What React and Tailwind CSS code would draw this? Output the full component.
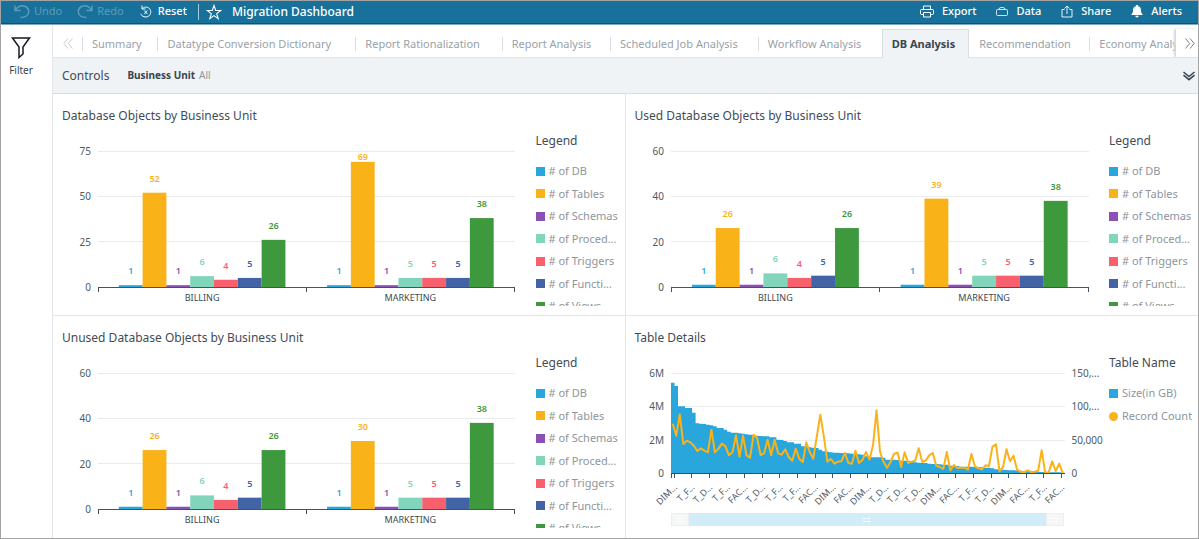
import { useState } from "react";

const SERIES = [
  { name: "# of DB", color: "#29a6dc" },
  { name: "# of Tables", color: "#fab219" },
  { name: "# of Schemas", color: "#8a50b4" },
  { name: "# of Proced...", color: "#81d5bb" },
  { name: "# of Triggers", color: "#f7606d" },
  { name: "# of Functi...", color: "#4363a7" },
  { name: "# of Views", color: "#3e983e" },
];

const TABS = [
  "Summary",
  "Datatype Conversion Dictionary",
  "Report Rationalization",
  "Report Analysis",
  "Scheduled Job Analysis",
  "Workflow Analysis",
  "DB Analysis",
  "Recommendation",
  "Economy Analysis",
];

const TABLE_LABELS = [
  "DIM", "T_F", "T_D", "T_F", "FAC", "T_D", "T_F", "T_F", "FAC", "DIM", "FAC", "DIM",
  "T_D", "T_D", "T_D", "DIM", "FAC", "T_F", "T_D", "DIM", "FAC", "T_F", "FAC",
];

// table sizes, in millions
const SIZES = [
  5.42, 5.22, 4, 4, 3.9, 3.9, 3.62, 2.98, 2.95, 2.94, 2.9, 2.86, 2.8, 2.7, 2.7, 2.6,
  2.48, 2.42, 2.42, 2.38, 2.36, 2.32, 2.3, 2.28, 2.24, 2.22, 2.2, 2.2, 2.15, 2.14,
  2, 1.98, 1.92, 1.85, 1.85, 1.75, 1.75, 1.6, 1.6, 1.55, 1.52, 1.5, 1.4, 1.3, 1.27,
  1.25, 1.22, 1.22, 1.2, 1.2, 1.18, 1.16, 1.14, 1.12, 1.1, 1, 0.96, 0.94, 0.94, 0.94,
  0.92, 0.8, 0.8, 0.8, 0.78, 0.74, 0.74, 0.74, 0.7, 0.64, 0.62, 0.6, 0.6, 0.56, 0.54,
  0.54, 0.52, 0.5, 0.5, 0.44, 0.42, 0.42, 0.38, 0.38, 0.38, 0.38, 0.36, 0.36, 0.34,
  0.32, 0.32, 0.28, 0.22, 0.2, 0.2, 0.18, 0.16, 0.16, 0.15, 0.14, 0.12, 0.12, 0.1,
  0.1, 0.08, 0.06, 0.06, 0.05, 0.05, 0.04, 0.04, 0.02,
];

// record counts, in thousands
const RECORDS = [
  74, 56, 88, 43.5, 48.5, 46, 41, 33, 37, 33.5, 31, 65, 31, 36.5, 44, 40, 26.5, 31,
  56.5, 24.5, 56, 26.5, 23, 57.5, 52.5, 27, 29.5, 50, 26.5, 50, 29.5, 27.5, 35.5, 24,
  18.5, 36.5, 21.5, 16.5, 46, 31.5, 21.5, 55, 87.5, 55, 17, 21, 14, 17, 17.5, 30, 15,
  14, 33.5, 15, 19.5, 31.5, 20, 41.5, 94, 31.5, 16.5, 8, 16.5, 29, 30.5, 9, 31, 15,
  17, 18.5, 37, 16.5, 18.5, 26.5, 30, 11, 9, 6, 31.5, 4, 12, 7.5, 8, 8, 5, 28.5, 10,
  7, 5.5, 11.5, 10.5, 39.5, 43, 2.5, 9, 35.5, 17.5, 26, 5, 2, 1, 4, 1.5, 2, 3.5, 34,
  1, 0.5, 17.5, 3, 14, 0,
];

function BarChart({ title, max, groups }) {
  const height = 136;
  const y = (v) => height - (v / max) * height;
  const band = 100 / groups.length;
  const barWidth = (band * 0.8) / SERIES.length;
  const steps = [3, 2, 1, 0].map((n) => (max / 3) * n);

  return (
    <svg
      role="img"
      aria-label={title}
      className="h-[160px] w-full overflow-visible text-[10px]"
    >
      {steps.map((v) => (
        <g key={v}>
          {v > 0 && (
            <line x1="0" x2="100%" y1={y(v)} y2={y(v)} stroke="#e9ebec" strokeWidth="1" shapeRendering="crispEdges" />
          )}
          <text x="-7" y={y(v) + 4} textAnchor="end" fill="#4d5b65">
            {v}
          </text>
        </g>
      ))}
      {groups.map((group, g) => (
        <g key={group.name}>
          {group.values.map((v, i) => {
            const x = band * (g + 0.1) + barWidth * i;
            return (
              <g key={SERIES[i].name} fill={SERIES[i].color}>
                <rect x={`${x}%`} y={y(v)} width={`${barWidth}%`} height={height - y(v)} />
                <text
                  x={`${x + barWidth / 2}%`}
                  y={Math.max(y(v) - 11, 9)}
                  textAnchor="middle"
                  className="text-[9px] font-semibold"
                >
                  {v}
                </text>
              </g>
            );
          })}
          <text x={`${band * (g + 0.5)}%`} y={height + 14} textAnchor="middle" className="text-[9px]" fill="#3c4a55">
            {group.name}
          </text>
        </g>
      ))}
      <line x1="0" x2="100%" y1={height} y2={height} stroke="#3f5566" shapeRendering="crispEdges" />
      {[0, 50, 100].map((x) => (
        <line key={x} x1={`${x}%`} x2={`${x}%`} y1={height} y2={height + 5} stroke="#3f5566" shapeRendering="crispEdges" />
      ))}
    </svg>
  );
}

function ComboChart() {
  const height = 100;
  const count = SIZES.length;
  const area = SIZES.map((v) => `V${(100 - v / 0.06).toFixed(1)}h1`).join("");
  const points = RECORDS.map((v, i) => `${i + 0.5},${100 - v / 1.5}`).join(" ");
  const left = ["6M", "4M", "2M", "0"];
  const right = ["150,...", "100,...", "50,000", "0"];
  const rows = [0, 33, 67, 100];

  return (
    <svg role="img" aria-label="Table Details" className="h-[132px] w-full overflow-visible text-[10px]">
      {rows.map((row, i) => (
        <g key={row} fill="#4d5b65">
          {row < 100 && (
            <line x1="0" x2="100%" y1={row} y2={row} stroke="#e9ebec" shapeRendering="crispEdges" />
          )}
          <text x="-7" y={row + 4} textAnchor="end">{left[i]}</text>
          <text x="100%" dx="7" y={row + 4}>{right[i]}</text>
        </g>
      ))}
      <svg width="100%" height={height} viewBox={`0 0 ${count} 100`} preserveAspectRatio="none" overflow="visible">
        <path d={`M0 100${area}V100z`} fill="#29a6dc" />
        <polyline
          points={points}
          fill="none"
          stroke="#fab219"
          strokeWidth="2"
          strokeLinejoin="round"
          vectorEffect="non-scaling-stroke"
        />
      </svg>
      <line x1="0" x2="100%" y1={height} y2={height} stroke="#24556f" shapeRendering="crispEdges" />
      <line x1="0" x2="0" y1={height} y2={height + 5} stroke="#3f5566" shapeRendering="crispEdges" />
      {TABLE_LABELS.map((label, i) => {
        const x = `${0.8 + i * 4.475}%`;
        return (
          <g key={i}>
            <line x1={x} x2={x} y1={height} y2={height + 5} stroke="#3f5566" shapeRendering="crispEdges" />
            <svg x={x} y={height + 14} overflow="visible">
              <text transform="rotate(-45)" x="2" y="3" textAnchor="end" className="text-[9px]" fill="#4d5b65">
                {label}...
              </text>
            </svg>
          </g>
        );
      })}
    </svg>
  );
}

function Grip() {
  return (
    <svg viewBox="0 0 8 5" className="h-[5px] w-2" stroke="#ffffff" strokeWidth="1" shapeRendering="crispEdges">
      <path d="M0 1h8M0 4h8" strokeDasharray="3 1" />
    </svg>
  );
}

function Panel({ title, children, className = "" }) {
  return (
    <section className={`min-w-0 border-[#e4e7e9] pt-3 pr-[7px] pl-[9px] ${className}`}>
      <h2 className="text-[12px] leading-5 text-[#3f4c57]">{title}</h2>
      {children}
    </section>
  );
}

function BusinessUnitPanel({ title, max, groups, className }) {
  return (
    <Panel title={title} className={className}>
      <div className="flex">
        <div className="min-w-0 flex-1 pt-[25px] pr-[21px] pl-9">
          <BarChart title={title} max={max} groups={groups} />
        </div>
        <aside className="w-[82px] shrink-0 pt-[5px]">
          <h3 className="text-[12px] leading-5 text-[#3f4c57]">Legend</h3>
          <div className="mt-[11px] h-[144px] overflow-hidden">
            <ul className="flex h-[153px] flex-col justify-between">
              {SERIES.map((s) => (
                <li
                  key={s.name}
                  className="flex items-center gap-1 text-[11px] leading-[18px] whitespace-nowrap text-[#8d969d]"
                >
                  <svg viewBox="0 0 9 9" className="size-[9px] shrink-0">
                    <rect width="9" height="9" fill={s.color} />
                  </svg>
                  {s.name}
                </li>
              ))}
            </ul>
          </div>
        </aside>
      </div>
    </Panel>
  );
}

function TopBar() {
  const button = "flex items-center gap-2 font-medium text-white";

  return (
    <header className="flex h-6 shrink-0 items-center justify-between border-b border-[#7fa9bf] bg-[#18719a] pr-4 pl-3 text-[11px] shadow-[inset_0_-1px_0_#0d5478]">
      <div className="-mt-0.5 flex items-center">
        <button type="button" disabled className="flex items-center gap-[3px] text-[#5d9bb8]">
          <svg viewBox="0 0 18 15" className="h-[15px] w-[18px]" fill="none" stroke="currentColor" strokeWidth="1.4">
            <path d="M2 1.5v5h5.5M2.5 6C5 2 9 1 12.5 2.5c4 2 4.2 7 1 9.500-1.500 1.200-3.500 1.500-6 1.500" />
          </svg>
          Undo
        </button>
        <button type="button" disabled className="ml-3.5 flex items-center gap-[3px] text-[#5d9bb8]">
          <svg viewBox="0 0 18 15" className="h-[15px] w-[18px]" fill="none" stroke="currentColor" strokeWidth="1.4">
            <path d="M16 1.5v5h-5.5M15.5 6C13 2 9 1 5.5 2.500c-4 2-4.200 7-1 9.500 1.500 1.200 3.500 1.500 6 1.500" />
          </svg>
          Redo
        </button>
        <button type="button" className="ml-4 flex items-center gap-1.5 font-medium text-white">
          <svg viewBox="0 0 12 13" className="h-[13px] w-3" fill="none" stroke="currentColor" strokeWidth="1">
            <path d="M2 .5v3.500h3.500M2.500 3.500C5 1.300 8.500 1.800 10 4.300c1.500 2.700.6 5.700-1.700 7C5.500 12.800 2 11.800.8 8.800" />
            <path d="M4.300 5.500l3 3.500M7.300 5.500l-3 3.500" />
          </svg>
          Reset
        </button>
        <span className="ml-[11px] h-4 w-px bg-[#a9cadb]" />
        <button type="button" aria-label="Add to favorites" className="ml-[7px] text-white">
          <svg viewBox="0 0 16 16" className="size-4" fill="none" stroke="currentColor" strokeWidth="1.1">
            <path d="M8 1.500l1.700 5h5.100l-4.100 3.100 1.500 5L8 11.600l-4.200 3 1.500-5L1.200 6.500h5.100z" />
          </svg>
        </button>
        <h1 className="ml-[10px] text-[12px] font-medium text-white">Migration Dashboard</h1>
      </div>
      <div className="-mt-0.5 flex items-center gap-5">
        <button type="button" className={button}>
          <svg viewBox="0 0 14 13" className="h-[13px] w-3.5" fill="none" stroke="currentColor" strokeWidth="1">
            <path d="M3.500 4V1h7v3M3.500 9.500H1.500a1 1 0 0 1-1-1V5.500a1 1 0 0 1 1-1h11a1 1 0 0 1 1 1v3a1 1 0 0 1-1 1h-2M3.500 7.500h7v4.500h-7z" />
          </svg>
          Export
        </button>
        <button type="button" className={button}>
          <svg viewBox="0 0 12 12" className="size-3" fill="none" stroke="currentColor" strokeWidth="0.8">
            <path d="M3 3.500q0-2 2-2h2q2 0 2 2M.5 4.500a1 1 0 0 1 1-1h9a1 1 0 0 1 1 1v4a1 1 0 0 1-1 1h-9a1 1 0 0 1-1-1z" />
          </svg>
          Data
        </button>
        <button type="button" className={button}>
          <svg viewBox="0 0 12 13" className="h-[13px] w-3" fill="none" stroke="currentColor" strokeWidth="0.9">
            <path d="M3.500 4.500h-2.500v7.500h10V4.500H8.500M6 9V1M3.500 3.500L6 1l2.500 2.500" />
          </svg>
          Share
        </button>
        <button type="button" className={button}>
          <svg viewBox="0 0 12 13" className="h-[13px] w-3" fill="currentColor">
            <path d="M6 0c.7 0 1.200.5 1.200 1.200C9.300 1.700 10 3.500 10 5.500c0 2.200.7 3.200 2 4.500H0c1.300-1.300 2-2.300 2-4.500 0-2 .7-3.800 2.800-4.300C4.800.5 5.300 0 6 0zM4.300 10.800h3.400C7.600 12 7 12.500 6 12.500s-1.600-.5-1.700-1.700z" />
          </svg>
          Alerts
        </button>
      </div>
    </header>
  );
}

function SheetTabs() {
  const [active, setActive] = useState("DB Analysis");

  return (
    <nav className="flex h-[33px] items-end border-b border-[#e1e5e8] bg-white">
      <button type="button" aria-label="Previous sheets" className="flex h-7 w-[29px] shrink-0 items-center justify-center text-[#c9ced2]">
        <svg viewBox="0 0 10 11" className="h-[11px] w-[10px]" fill="none" stroke="currentColor">
          <path d="M5 .5L.8 5.500 5 10.500M9.500.5L5.300 5.500l4.200 5" />
        </svg>
      </button>
      <div className="-mb-px flex min-w-0 flex-1 items-end overflow-hidden">
        {TABS.map((tab, i) => {
          const selected = tab === active;
          const beside = selected || TABS[i - 1] === active;
          return (
            <button
              key={tab}
              type="button"
              onClick={() => setActive(tab)}
              className={
                selected
                  ? "h-[29px] shrink-0 border border-b-0 border-[#d9dee1] bg-[#eff3f6] pt-px pr-[13px] pl-[9px] text-[11px] font-bold text-[#38444e]"
                  : "flex h-[29px] shrink-0 items-center text-[11px] text-[#98a2a9]"
              }
            >
              {!selected && <span className={beside ? "h-3.5 w-px" : "h-3.5 w-px bg-[#d9dee1]"} />}
              {/* the bold copy keeps a tab's width the same when it is selected */}
              <span
                data-label={tab}
                className={
                  selected
                    ? ""
                    : "pt-px pr-[13px] pl-[9px] text-left after:invisible after:block after:h-0 after:overflow-hidden after:font-bold after:content-[attr(data-label)]"
                }
              >
                {tab}
              </span>
            </button>
          );
        })}
      </div>
      <button
        type="button"
        aria-label="Next sheets"
        className="flex h-7 w-[22px] shrink-0 items-center justify-end pr-[3px] text-[#75818a] shadow-[-2px_0_2px_#d5d9dc]"
      >
        <svg viewBox="0 0 10 11" className="h-[11px] w-[10px]" fill="none" stroke="currentColor">
          <path d="M.5.5l4.200 5-4.200 5M5 .5l4.200 5L5 10.500" />
        </svg>
      </button>
    </nav>
  );
}

export default function App() {
  return (
    <div className="flex min-h-screen flex-col border border-[#a3a3a3] bg-white font-['Noto_Sans',sans-serif]">
      <TopBar />
      <div className="flex flex-1">
        <div className="w-[52px] shrink-0 border-r border-[#e4e7e9] pt-3">
          <button type="button" className="flex w-10 flex-col items-center gap-1 text-[10px] text-[#38444e]">
            <svg viewBox="0 0 20 22" className="h-[22px] w-5" fill="none" stroke="#16191f" strokeWidth="1.5">
              <path d="M1.500 1h17l-6.500 9v7L8 20.500V10z" />
            </svg>
            Filter
          </button>
        </div>

        <main className="flex min-w-0 flex-1 flex-col">
          <SheetTabs />

          <div className="flex h-9 items-center border-b border-[#d9dee1] bg-[#eff3f6] pr-[3px] pl-[9px]">
            <span className="text-[12px] text-[#3f4c57]">Controls</span>
            <span className="ml-[18px] text-[10px] font-bold text-[#38444e]">Business Unit</span>
            <span className="ml-1 text-[10px] text-[#8d969d]">All</span>
            <button type="button" aria-label="Expand controls" className="ml-auto text-[#38444e]">
              <svg viewBox="0 0 12 10" className="h-[10px] w-3" fill="none" stroke="currentColor" strokeWidth="1.5">
                <path d="M.5 1L6 5.500l5.500-4.500M.5 4.200L6 8.700l5.500-4.500" />
              </svg>
            </button>
          </div>

          {/* Charts */}
          <div className="grid flex-1 grid-cols-2 grid-rows-2">
            <BusinessUnitPanel
              title="Database Objects by Business Unit"
              max={75}
              groups={[
                { name: "BILLING", values: [1, 52, 1, 6, 4, 5, 26] },
                { name: "MARKETING", values: [1, 69, 1, 5, 5, 5, 38] },
              ]}
              className="border-r border-b"
            />
            <BusinessUnitPanel
              title="Used Database Objects by Business Unit"
              max={60}
              groups={[
                { name: "BILLING", values: [1, 26, 1, 6, 4, 5, 26] },
                { name: "MARKETING", values: [1, 39, 1, 5, 5, 5, 38] },
              ]}
              className="border-b"
            />
            <BusinessUnitPanel
              title="Unused Database Objects by Business Unit"
              max={60}
              groups={[
                { name: "BILLING", values: [1, 26, 1, 6, 4, 5, 26] },
                { name: "MARKETING", values: [1, 30, 1, 5, 5, 5, 38] },
              ]}
              className="border-r"
            />
            <Panel title="Table Details">
              <div className="flex">
                <div className="min-w-0 flex-1 pt-[25px] pr-[45px] pl-9">
                  <ComboChart />
                  <div className="mt-2 flex h-[13px] text-white">
                    <div className="flex w-[18px] items-center justify-center border border-[#eceeef] bg-[#f5f7f7]">
                      <Grip />
                    </div>
                    <div className="flex flex-1 items-center justify-center bg-[#d3edf8]">
                      <Grip />
                    </div>
                    <div className="flex w-[18px] items-center justify-center border border-[#eceeef] bg-[#f5f7f7]">
                      <Grip />
                    </div>
                  </div>
                </div>
                <aside className="w-[82px] shrink-0 pt-[5px]">
                  <h3 className="text-[12px] leading-5 text-[#3f4c57]">Table Name</h3>
                  <ul className="mt-[11px] flex flex-col gap-[5px] text-[11px] leading-[18px] whitespace-nowrap text-[#8d969d]">
                    <li className="flex items-center gap-1">
                      <span className="size-[9px] shrink-0 bg-[#29a6dc]" />
                      Size(in GB)
                    </li>
                    <li className="flex items-center gap-1">
                      <span className="size-[9px] shrink-0 rounded-full bg-[#fab219]" />
                      Record Count
                    </li>
                  </ul>
                </aside>
              </div>
            </Panel>
          </div>
        </main>
      </div>
    </div>
  );
}
